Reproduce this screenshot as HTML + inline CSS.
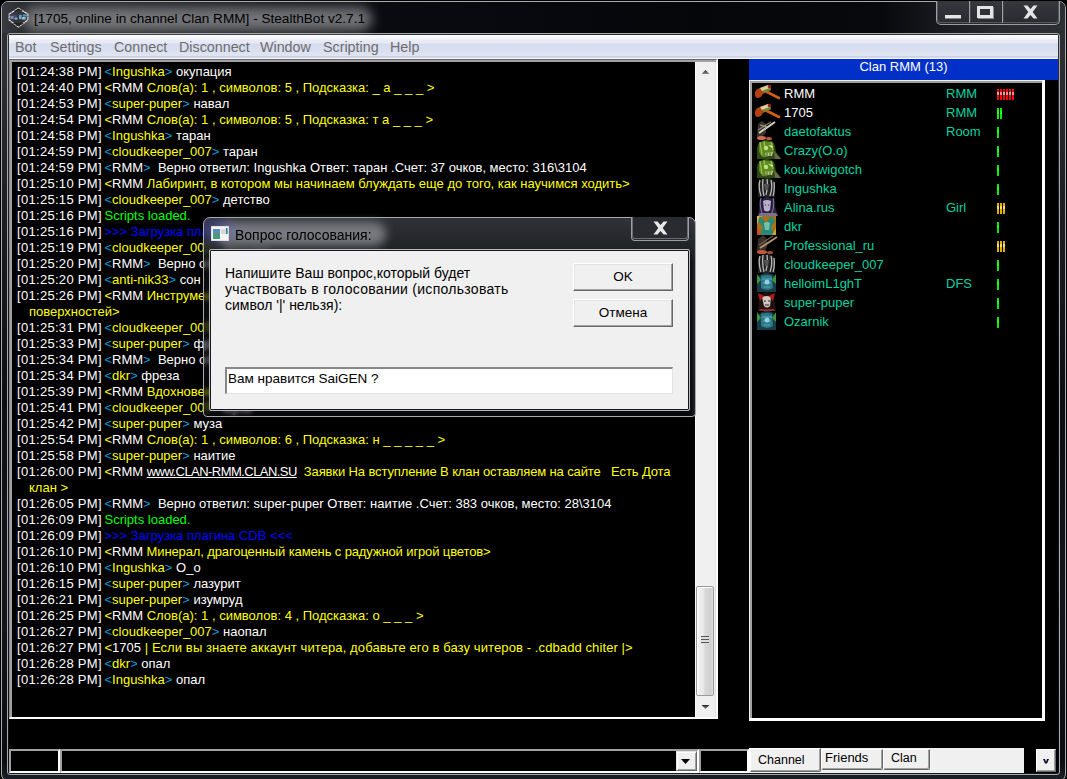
<!DOCTYPE html>
<html><head><meta charset="utf-8">
<style>
*{margin:0;padding:0;box-sizing:border-box}
html,body{width:1067px;height:779px;overflow:hidden;background:#000}
body{position:relative;font-family:"Liberation Sans",sans-serif}
.a{position:absolute}
#frame{left:1px;top:1px;width:1065px;height:781px;border:1px solid #a9abae;border-radius:7px 7px 8px 8px;
 background:linear-gradient(180deg,#2e2f33 0px,#2e2f33 60px,#1d1f23 200px,#0c0e12 400px,#14161b 600px,#0a0c10 760px,#1a1e25 776px)}
#titlebar{left:2px;top:2px;width:1063px;height:31px;border-radius:6px 6px 0 0;
 background:linear-gradient(90deg,#3a3b40 0px,#2a2b2f 20px,#0a0b10 380px,#05060a 700px,#08090d 880px,#2a2b30 1000px,#2e2f33 1063px)}
#titleglow{left:24px;top:7px;width:348px;height:24px;border-radius:12px;background:#8a8b8e;filter:blur(6px);opacity:.8}
#title{left:34px;top:10px;font-size:13.6px;color:#000;white-space:pre;line-height:18px}
#innerline{left:7px;top:33px;width:1053px;height:742px;border:1px solid #a5a7aa;border-radius:3px}
#client{left:9px;top:35px;width:1049px;height:738px;background:#000}
#menubar{left:9px;top:35px;width:1049px;height:24px;
 background:linear-gradient(180deg,#fcfcfe 0px,#f4f5fa 4px,#e9ecf6 5px,#e6e9f5 8px,#d6dbee 9px,#e0e5f3 21px,#b9bfd4 22px,#f4f5f8 23px)}
.mi{top:38px;font-size:14.3px;color:#6d6d6d;white-space:pre;line-height:18px}
#chat{left:9px;top:59px;width:709px;height:660px;background:#000;
 border-top:1px solid #696969;border-left:1px solid #8a8a8a;border-right:2px solid #fff;border-bottom:2px solid #fff}
#chatin{left:10px;top:60px;width:706px;height:657px;border-top:2px solid #a0a0a0;border-left:2px solid #a0a0a0}
#vs{left:695px;top:62px;width:21px;height:655px;background:linear-gradient(90deg,#fcfcfc 0,#fcfcfc 1px,#f0f0f0 1px,#f0f0f0 20px,#e3e3e3 20px)}
#lines{left:17px;top:64px;width:680px;font-size:13px;line-height:16px;color:#fff}
#lines div{height:16px;white-space:pre}
.y{color:#ffff00}.c{color:#0a9ad8}.g{color:#00ff00}.b{color:#0000ff}.u{text-decoration:underline}
.ind{padding-left:12px}
.ts{letter-spacing:.3px;margin-right:-1px}
#hdr{left:749px;top:59px;width:309px;height:21px;background:#0030c8;color:#fff;font-size:13px;line-height:16px;text-align:center}
#ul{left:749px;top:80px;width:296px;height:641px;background:#000;
 border-top:1px solid #f0f0f0;border-left:1px solid #f0f0f0;border-right:3px solid #fff;border-bottom:3px solid #fff}
#ulin{left:750px;top:81px;width:292px;height:637px;border-top:2px solid #a0a0a0;border-left:2px solid #a0a0a0}

.box{background:#000;border-top:2px solid #a0a0a0;border-left:2px solid #a0a0a0;border-right:2px solid #fff;border-bottom:2px solid #fff}

.ur{position:absolute;left:0;width:296px;height:19px}
.ur svg{position:absolute;left:4px;top:0}
.ur .n{position:absolute;left:34px;top:1px;font-size:13px;line-height:19px;white-space:pre;color:#00d4a0}
.ur .cl{position:absolute;left:196px;top:1px;font-size:13px;line-height:19px;white-space:pre;color:#00d4a0}
.ur .lag{position:absolute;left:247px;top:6px;height:11px}
.tbb{border:1px solid #9c9ea2;border-top:none}
.btn3d{background:#f0f0f0;border-top:1px solid #fff;border-left:1px solid #fff;border-right:1px solid #696969;border-bottom:1px solid #696969;box-shadow:inset -1px -1px 0 #a0a0a0, inset 1px 1px 0 #e3e3e3}
.dlgt{font-size:14px;line-height:16px;white-space:pre;color:#000}
</style></head><body>
<div class="a" id="frame"></div>
<div class="a" id="titlebar"></div>
<div class="a" id="titleglow"></div>
<div class="a" id="title">[1705, online in channel Clan RMM] - StealthBot v2.7.1</div>
<div class="a" id="innerline"></div>
<div class="a" id="client"></div>
<div class="a" id="menubar"></div>
<div class="a mi" style="left:15px">Bot</div>
<div class="a mi" style="left:50px">Settings</div>
<div class="a mi" style="left:114px">Connect</div>
<div class="a mi" style="left:179px">Disconnect</div>
<div class="a mi" style="left:260px">Window</div>
<div class="a mi" style="left:323px">Scripting</div>
<div class="a mi" style="left:390px">Help</div>

<div class="a" id="chat"></div>
<div class="a" id="chatin"></div>
<div class="a" id="vs"></div>
<div class="a" id="lines">
<div><span class="ts">[01:24:38 PM]</span> <span class="c">&lt;</span><span class="y">Ingushka</span><span class="c">&gt;</span> окупация</div>
<div><span class="ts">[01:24:40 PM]</span> <span class="y">&lt;</span>RMM<span class="y"> Слов(а): 1 , символов: 5 , Подсказка: _ а _ _ _ &gt;</span></div>
<div><span class="ts">[01:24:53 PM]</span> <span class="c">&lt;</span><span class="y">super-puper</span><span class="c">&gt;</span> навал</div>
<div><span class="ts">[01:24:54 PM]</span> <span class="y">&lt;</span>RMM<span class="y"> Слов(а): 1 , символов: 5 , Подсказка: т а _ _ _ &gt;</span></div>
<div><span class="ts">[01:24:58 PM]</span> <span class="c">&lt;</span><span class="y">Ingushka</span><span class="c">&gt;</span> таран</div>
<div><span class="ts">[01:24:59 PM]</span> <span class="c">&lt;</span><span class="y">cloudkeeper_007</span><span class="c">&gt;</span> таран</div>
<div><span class="ts">[01:24:59 PM]</span> <span class="c">&lt;</span>RMM<span class="c">&gt;</span>  Верно ответил: Ingushka Ответ: таран .Счет: 37 очков, место: 316\3104</div>
<div><span class="ts">[01:25:10 PM]</span> <span class="y">&lt;</span>RMM<span class="y"> Лабиринт, в котором мы начинаем блуждать еще до того, как научимся ходить&gt;</span></div>
<div><span class="ts">[01:25:15 PM]</span> <span class="c">&lt;</span><span class="y">cloudkeeper_007</span><span class="c">&gt;</span> детство</div>
<div><span class="ts">[01:25:16 PM]</span> <span class="g">Scripts loaded.</span></div>
<div><span class="ts">[01:25:16 PM]</span> <span class="b">&gt;&gt;&gt; Загрузка плагина CDB &lt;&lt;&lt;</span></div>
<div><span class="ts">[01:25:19 PM]</span> <span class="c">&lt;</span><span class="y">cloudkeeper_007</span><span class="c">&gt;</span> детство</div>
<div><span class="ts">[01:25:20 PM]</span> <span class="c">&lt;</span>RMM<span class="c">&gt;</span>  Верно ответил: cloudkeeper_007 Ответ: детство .Счет: 52 очков, место: 250\3104</div>
<div><span class="ts">[01:25:20 PM]</span> <span class="c">&lt;</span><span class="y">anti-nik33</span><span class="c">&gt;</span> сон</div>
<div><span class="ts">[01:25:26 PM]</span> <span class="y">&lt;</span>RMM<span class="y"> Инструмент для обработки металлических и деревянных поверхностей, режущий</span></div>
<div class="ind"><span class="y">поверхностей&gt;</span></div>
<div><span class="ts">[01:25:31 PM]</span> <span class="c">&lt;</span><span class="y">cloudkeeper_007</span><span class="c">&gt;</span> фреза</div>
<div><span class="ts">[01:25:33 PM]</span> <span class="c">&lt;</span><span class="y">super-puper</span><span class="c">&gt;</span> фреза</div>
<div><span class="ts">[01:25:34 PM]</span> <span class="c">&lt;</span>RMM<span class="c">&gt;</span>  Верно ответил: dkr Ответ: фреза .Счет: 12 очков, место: 900\3104</div>
<div><span class="ts">[01:25:34 PM]</span> <span class="c">&lt;</span><span class="y">dkr</span><span class="c">&gt;</span> фреза</div>
<div><span class="ts">[01:25:39 PM]</span> <span class="y">&lt;</span>RMM<span class="y"> Вдохновение, творческий дух поэта&gt;</span></div>
<div><span class="ts">[01:25:41 PM]</span> <span class="c">&lt;</span><span class="y">cloudkeeper_007</span><span class="c">&gt;</span> муза</div>
<div><span class="ts">[01:25:42 PM]</span> <span class="c">&lt;</span><span class="y">super-puper</span><span class="c">&gt;</span> муза</div>
<div><span class="ts">[01:25:54 PM]</span> <span class="y">&lt;</span>RMM<span class="y"> Слов(а): 1 , символов: 6 , Подсказка: н _ _ _ _ _ &gt;</span></div>
<div><span class="ts">[01:25:58 PM]</span> <span class="c">&lt;</span><span class="y">super-puper</span><span class="c">&gt;</span> наитие</div>
<div><span class="ts">[01:26:00 PM]</span> <span class="y">&lt;</span>RMM <span class="u" style="letter-spacing:-.55px">www.CLAN-RMM.CLAN.SU</span><span class="y" style="letter-spacing:-.12px">  Заявки На вступление В клан оставляем на сайте   Есть Дота</span></div>
<div class="ind"><span class="y">клан &gt;</span></div>
<div><span class="ts">[01:26:05 PM]</span> <span class="c">&lt;</span>RMM<span class="c">&gt;</span>  Верно ответил: super-puper Ответ: наитие .Счет: 383 очков, место: 28\3104</div>
<div><span class="ts">[01:26:09 PM]</span> <span class="g">Scripts loaded.</span></div>
<div><span class="ts">[01:26:09 PM]</span> <span class="b">&gt;&gt;&gt; Загрузка плагина CDB &lt;&lt;&lt;</span></div>
<div><span class="ts">[01:26:10 PM]</span> <span class="y">&lt;</span>RMM<span class="y" style="letter-spacing:-.12px"> Минерал, драгоценный камень с радужной игрой цветов&gt;</span></div>
<div><span class="ts">[01:26:10 PM]</span> <span class="c">&lt;</span><span class="y">Ingushka</span><span class="c">&gt;</span> O_o</div>
<div><span class="ts">[01:26:15 PM]</span> <span class="c">&lt;</span><span class="y">super-puper</span><span class="c">&gt;</span> лазурит</div>
<div><span class="ts">[01:26:21 PM]</span> <span class="c">&lt;</span><span class="y">super-puper</span><span class="c">&gt;</span> изумруд</div>
<div><span class="ts">[01:26:25 PM]</span> <span class="y">&lt;</span>RMM<span class="y"> Слов(а): 1 , символов: 4 , Подсказка: о _ _ _ &gt;</span></div>
<div><span class="ts">[01:26:27 PM]</span> <span class="c">&lt;</span><span class="y">cloudkeeper_007</span><span class="c">&gt;</span> наопал</div>
<div><span class="ts">[01:26:27 PM]</span> <span class="y">&lt;</span>1705<span class="y" style="letter-spacing:.1px"> | Если вы знаете аккаунт читера, добавьте его в базу читеров - .cdbadd chiter |&gt;</span></div>
<div><span class="ts">[01:26:28 PM]</span> <span class="c">&lt;</span><span class="y">dkr</span><span class="c">&gt;</span> опал</div>
<div><span class="ts">[01:26:28 PM]</span> <span class="c">&lt;</span><span class="y">Ingushka</span><span class="c">&gt;</span> опал</div>
</div>

<div class="a" id="hdr">Clan RMM (13)</div>
<div class="a" id="ul"></div>
<div class="a" id="ulin"></div>

<div class="a box" style="left:9px;top:749px;width:51px;height:24px"></div>
<div class="a box" style="left:60px;top:749px;width:639px;height:24px"></div>
<div class="a box" style="left:699px;top:749px;width:50px;height:24px"></div>
<div class="a" style="left:750px;top:83px;width:296px;height:300px">
<div class="ur" style="top:0px"><svg width="28" height="19" viewBox="0 0 28 19"><line x1="13" y1="9" x2="25" y2="15" stroke="#d06010" stroke-width="2.6" stroke-linecap="round"/><path d="M1,11 Q1,6 6,5 L14,2 Q17,3 17,7 L9,11 Q6,15 3,15 Q1,14 1,11Z" fill="#a84a10"/><path d="M6,5 L14,2 Q16,3 16,5 L8,8Z" fill="#d8d0a0"/><path d="M9,8 L16,5 L17,7 L10,10Z" fill="#709040"/><ellipse cx="4.5" cy="11" rx="3.5" ry="3.6" fill="#b84010"/><circle cx="15.5" cy="3.5" r="1.8" fill="#902818"/></svg><span class="n" style="color:#ffffff">RMM</span><span class="cl">RMM</span><svg class="lag" width="18" height="11"><rect x="0" y="0" width="2" height="11" fill="#ff0000"/><rect x="0" y="3" width="2" height="3" fill="#ff9090"/><rect x="3" y="0" width="2" height="11" fill="#ff0000"/><rect x="3" y="3" width="2" height="3" fill="#ff9090"/><rect x="6" y="0" width="2" height="11" fill="#ff0000"/><rect x="6" y="3" width="2" height="3" fill="#ff9090"/><rect x="9" y="0" width="2" height="11" fill="#ff0000"/><rect x="9" y="3" width="2" height="3" fill="#ff9090"/><rect x="12" y="0" width="2" height="11" fill="#ff0000"/><rect x="12" y="3" width="2" height="3" fill="#ff9090"/><rect x="15" y="0" width="2" height="11" fill="#ff0000"/><rect x="15" y="3" width="2" height="3" fill="#ff9090"/></svg></div>
<div class="ur" style="top:19px"><svg width="28" height="19" viewBox="0 0 28 19"><line x1="13" y1="9" x2="25" y2="15" stroke="#d06010" stroke-width="2.6" stroke-linecap="round"/><path d="M1,11 Q1,6 6,5 L14,2 Q17,3 17,7 L9,11 Q6,15 3,15 Q1,14 1,11Z" fill="#a84a10"/><path d="M6,5 L14,2 Q16,3 16,5 L8,8Z" fill="#d8d0a0"/><path d="M9,8 L16,5 L17,7 L10,10Z" fill="#709040"/><ellipse cx="4.5" cy="11" rx="3.5" ry="3.6" fill="#b84010"/><circle cx="15.5" cy="3.5" r="1.8" fill="#902818"/></svg><span class="n" style="color:#ffffff">1705</span><span class="cl">RMM</span><svg class="lag" width="6" height="11"><rect x="0" y="0" width="2" height="11" fill="#00ee00"/><rect x="0" y="3" width="2" height="3" fill="#20ff20"/><rect x="3" y="0" width="2" height="11" fill="#00ee00"/><rect x="3" y="3" width="2" height="3" fill="#20ff20"/></svg></div>
<div class="ur" style="top:38px"><svg width="28" height="19" viewBox="0 0 28 19"><path d="M3,16 L4,3 L8,0 L12,3 L12,12 L8,16Z" fill="#3a3430"/><path d="M21,1 L5,12" stroke="#d8d0c0" stroke-width="2"/><path d="M17,1 L4,9" stroke="#8a8070" stroke-width="1.2"/><path d="M6,4 L13,6 L9,10" stroke="#b0a898" stroke-width="1" fill="none"/><ellipse cx="7.5" cy="17" rx="4.5" ry="2" fill="#d06a50"/><ellipse cx="15" cy="17.5" rx="3" ry="1.6" fill="#c05a40"/></svg><span class="n">daetofaktus</span><span class="cl">Room</span><svg class="lag" width="3" height="11"><rect x="0" y="0" width="2" height="11" fill="#00ee00"/><rect x="0" y="3" width="2" height="3" fill="#20ff20"/></svg></div>
<div class="ur" style="top:57px"><svg width="28" height="19" viewBox="0 0 28 19"><path d="M3,19 L3,7 Q5,0 13,0 Q20,0 21,6 L22,12 L27,19Z" fill="#2e4a10"/><path d="M5,3 Q12,0 19,3 L20,12 Q15,18 8,17 L5,12Z" fill="#5e8a22"/><path d="M6,2 L8,15 M10,1 L11,9 M17,2 L19,10" stroke="#9cc050" stroke-width="1.2"/><circle cx="12" cy="8" r="2.2" fill="#c0e080"/><path d="M14,5 L19,6 L18,8Z" fill="#d8f0a0"/><path d="M11,13 L19,12 L18,16 L12,16Z" fill="#b8c888"/><path d="M13,13 L13,16 M16,12.5 L16,16" stroke="#2e4010" stroke-width=".8"/><path d="M20,11 L27,19 L21,19Z" fill="#6a6a48"/></svg><span class="n">Crazy(O.o)</span><span class="cl"></span><svg class="lag" width="3" height="11"><rect x="0" y="0" width="2" height="11" fill="#00ee00"/><rect x="0" y="3" width="2" height="3" fill="#20ff20"/></svg></div>
<div class="ur" style="top:76px"><svg width="28" height="19" viewBox="0 0 28 19"><path d="M3,19 L3,7 Q5,0 13,0 Q20,0 21,6 L22,12 L27,19Z" fill="#2e4a10"/><path d="M5,3 Q12,0 19,3 L20,12 Q15,18 8,17 L5,12Z" fill="#5e8a22"/><path d="M6,2 L8,15 M10,1 L11,9 M17,2 L19,10" stroke="#9cc050" stroke-width="1.2"/><circle cx="12" cy="8" r="2.2" fill="#c0e080"/><path d="M14,5 L19,6 L18,8Z" fill="#d8f0a0"/><path d="M11,13 L19,12 L18,16 L12,16Z" fill="#b8c888"/><path d="M13,13 L13,16 M16,12.5 L16,16" stroke="#2e4010" stroke-width=".8"/><path d="M20,11 L27,19 L21,19Z" fill="#6a6a48"/></svg><span class="n">kou.kiwigotch</span><span class="cl"></span><svg class="lag" width="3" height="11"><rect x="0" y="0" width="2" height="11" fill="#00ee00"/><rect x="0" y="3" width="2" height="3" fill="#20ff20"/></svg></div>
<div class="ur" style="top:95px"><svg width="28" height="19" viewBox="0 0 28 19"><path d="M4,19 L4,5 Q7,0 13,0 Q19,0 21,5 L21,19Z" fill="#222"/><path d="M6,2 Q4,9 7,18 M9,1 Q8,10 10,18 M13,1 Q14,9 12,17 M17,2 Q19,10 16,18 M20,4 Q21,12 19,18" stroke="#b8b8b8" stroke-width="1.3" fill="none"/><path d="M10,6 L15,6 L14,12 L11,12Z" fill="#555"/></svg><span class="n">Ingushka</span><span class="cl"></span><svg class="lag" width="3" height="11"><rect x="0" y="0" width="2" height="11" fill="#00ee00"/><rect x="0" y="3" width="2" height="3" fill="#20ff20"/></svg></div>
<div class="ur" style="top:114px"><svg width="28" height="19" viewBox="0 0 28 19"><path d="M4,19 L6,5 Q9,0 14,0 Q19,1 20,6 L24,19Z" fill="#2a2040"/><path d="M9,4 Q13,2 17,4 L16,13 Q13,16 10,13Z" fill="#b8b0c8"/><path d="M11,8 L12,8 M14,8 L15,8" stroke="#302040" stroke-width="1"/><path d="M7,1 Q5,8 8,16 M19,1 Q21,8 18,16" stroke="#8070a0" stroke-width="1.2" fill="none"/><path d="M6,16 L22,16 L24,19 L4,19Z" fill="#7a7090"/></svg><span class="n">Alina.rus</span><span class="cl">Girl</span><svg class="lag" width="9" height="11"><rect x="0" y="0" width="2" height="11" fill="#e0b000"/><rect x="0" y="3" width="2" height="3" fill="#ffe060"/><rect x="3" y="0" width="2" height="11" fill="#e0b000"/><rect x="3" y="3" width="2" height="3" fill="#ffe060"/><rect x="6" y="0" width="2" height="11" fill="#e0b000"/><rect x="6" y="3" width="2" height="3" fill="#ffe060"/></svg></div>
<div class="ur" style="top:133px"><svg width="28" height="19" viewBox="0 0 28 19"><rect x="3" y="0" width="19" height="19" fill="#a87018"/><path d="M3,0 L8,0 L3,8Z" fill="#d8b040"/><path d="M6,0 L12,7 L17,0 L21,5 L17,11 L21,19 L6,19 L9,11 L4,5Z" fill="#2a8878"/><path d="M10,7 Q13,5 16,7 L15,14 L11,14Z" fill="#70c0a8"/><path d="M3,11 L7,19 L3,19Z" fill="#d04818"/><path d="M22,12 L18,19 L22,19Z" fill="#d8a030"/></svg><span class="n">dkr</span><span class="cl"></span><svg class="lag" width="3" height="11"><rect x="0" y="0" width="2" height="11" fill="#00ee00"/><rect x="0" y="3" width="2" height="3" fill="#20ff20"/></svg></div>
<div class="ur" style="top:152px"><svg width="28" height="19" viewBox="0 0 28 19"><path d="M3,17 L4,4 L9,0 L13,4 L13,13 L8,17Z" fill="#3a3028"/><path d="M23,2 L6,13" stroke="#b09070" stroke-width="2"/><path d="M19,1 L5,10" stroke="#706050" stroke-width="1.2"/><ellipse cx="8" cy="17" rx="5" ry="2" fill="#c05a38"/><ellipse cx="16" cy="17.5" rx="3" ry="1.5" fill="#a84a30"/></svg><span class="n">Professional_ru</span><span class="cl"></span><svg class="lag" width="9" height="11"><rect x="0" y="0" width="2" height="11" fill="#e0b000"/><rect x="0" y="3" width="2" height="3" fill="#ffe060"/><rect x="3" y="0" width="2" height="11" fill="#e0b000"/><rect x="3" y="3" width="2" height="3" fill="#ffe060"/><rect x="6" y="0" width="2" height="11" fill="#e0b000"/><rect x="6" y="3" width="2" height="3" fill="#ffe060"/></svg></div>
<div class="ur" style="top:171px"><svg width="28" height="19" viewBox="0 0 28 19"><path d="M4,19 L4,5 Q7,0 13,0 Q19,0 21,5 L21,19Z" fill="#222"/><path d="M6,2 Q4,9 7,18 M9,1 Q8,10 10,18 M13,1 Q14,9 12,17 M17,2 Q19,10 16,18 M20,4 Q21,12 19,18" stroke="#b8b8b8" stroke-width="1.3" fill="none"/><path d="M10,6 L15,6 L14,12 L11,12Z" fill="#555"/></svg><span class="n">cloudkeeper_007</span><span class="cl"></span><svg class="lag" width="3" height="11"><rect x="0" y="0" width="2" height="11" fill="#00ee00"/><rect x="0" y="3" width="2" height="3" fill="#20ff20"/></svg></div>
<div class="ur" style="top:190px"><svg width="28" height="19" viewBox="0 0 28 19"><path d="M3,19 L3,6 Q6,0 13,0 Q20,0 22,6 L22,19Z" fill="#183c48"/><path d="M7,3 Q13,1 18,3 L19,15 Q13,19 7,15Z" fill="#2e7888"/><path d="M8,6 L18,6 M9,10 L17,10 M10,14 L16,14" stroke="#5aa8b8" stroke-width="1"/><circle cx="13" cy="9" r="2.5" fill="#90d0e0"/><path d="M3,1 L7,7 L3,11Z M22,1 L18,7 L22,11Z" fill="#3a9a3a"/></svg><span class="n">helloimL1ghT</span><span class="cl">DFS</span><svg class="lag" width="3" height="11"><rect x="0" y="0" width="2" height="11" fill="#00ee00"/><rect x="0" y="3" width="2" height="3" fill="#20ff20"/></svg></div>
<div class="ur" style="top:209px"><svg width="28" height="19" viewBox="0 0 28 19"><path d="M4,19 L5,6 Q8,0 13,0 Q19,0 20,6 L22,19Z" fill="#201010"/><path d="M8,5 Q13,3 17,5 L16,14 Q13,17 10,14Z" fill="#d0c8c0"/><path d="M10,9 L12,9 M14,9 L16,9 M11,13 L15,13" stroke="#301818" stroke-width="1"/><path d="M4,1 L10,4 L6,9Z M21,1 L15,4 L19,9Z" fill="#b81818"/><path d="M6,17 L20,17 L21,19 L5,19Z" fill="#902828"/></svg><span class="n">super-puper</span><span class="cl"></span><svg class="lag" width="3" height="11"><rect x="0" y="0" width="2" height="11" fill="#00ee00"/><rect x="0" y="3" width="2" height="3" fill="#20ff20"/></svg></div>
<div class="ur" style="top:228px"><svg width="28" height="19" viewBox="0 0 28 19"><path d="M3,19 L3,6 Q6,0 13,0 Q20,0 22,6 L22,19Z" fill="#183c48"/><path d="M7,3 Q13,1 18,3 L19,15 Q13,19 7,15Z" fill="#2e7888"/><path d="M8,6 L18,6 M9,10 L17,10 M10,14 L16,14" stroke="#5aa8b8" stroke-width="1"/><circle cx="13" cy="9" r="2.5" fill="#90d0e0"/><path d="M3,1 L7,7 L3,11Z M22,1 L18,7 L22,11Z" fill="#3a9a3a"/></svg><span class="n">Ozarnik</span><span class="cl"></span><svg class="lag" width="3" height="11"><rect x="0" y="0" width="2" height="11" fill="#00ee00"/><rect x="0" y="3" width="2" height="3" fill="#20ff20"/></svg></div>
</div>

<svg class="a" style="left:701px;top:69px" width="9" height="6" viewBox="0 0 9 6"><defs><linearGradient id="ga" x1="0" y1="0" x2="0" y2="1"><stop offset="0" stop-color="#202020"/><stop offset="1" stop-color="#909090"/></linearGradient></defs><path d="M4.5,1 L8.5,5 L0.5,5Z" fill="url(#ga)"/></svg>
<svg class="a" style="left:701px;top:704px" width="9" height="6" viewBox="0 0 9 6"><defs><linearGradient id="gb" x1="0" y1="0" x2="0" y2="1"><stop offset="0" stop-color="#202020"/><stop offset="1" stop-color="#909090"/></linearGradient></defs><path d="M0.5,1 L8.5,1 L4.5,5Z" fill="url(#gb)"/></svg>
<div class="a" style="left:696px;top:586px;width:18px;height:110px;border:1px solid #9a9a9a;border-radius:2px;background:linear-gradient(90deg,#f4f4f4 0,#e8e8e8 40%,#d8d8d8 50%,#d0d0d0 85%,#e0e0e0 100%);box-shadow:inset 1px 1px 0 #fff"></div>
<div class="a" style="left:701px;top:636px;width:8px;height:8px;background:repeating-linear-gradient(180deg,#555 0,#555 1px,#ddd 1px,#ddd 3px)"></div>

<div class="a" style="left:676px;top:751px;width:21px;height:20px;background:#f0f0f0;border-top:1px solid #e3e3e3;border-left:1px solid #e3e3e3;border-right:1px solid #696969;border-bottom:1px solid #696969;box-shadow:inset 1px 1px 0 #fff,inset -1px -1px 0 #a0a0a0"></div>
<svg class="a" style="left:681px;top:759px" width="9" height="5" viewBox="0 0 9 5"><path d="M0,0 L9,0 L4.5,5Z" fill="#000"/></svg>
<div class="a" style="left:749px;top:748px;width:275px;height:25px;background:#f0f0f0"></div>
<div class="a" style="left:749px;top:748px;width:72px;height:24px;background:#f0f0f0;border-left:2px solid #fff;border-top:1px solid #fff;border-right:1px solid #696969;border-bottom:1px solid #696969;border-radius:0 0 2px 2px;box-shadow:inset -1px -1px 0 #a0a0a0"></div>
<div class="a" style="left:821px;top:749px;width:62px;height:21px;background:#f0f0f0;border-left:1px solid #fff;border-top:1px solid #fff;border-right:1px solid #696969;border-bottom:1px solid #696969;border-radius:0 0 2px 2px;box-shadow:inset -1px -1px 0 #a0a0a0"></div>
<div class="a" style="left:883px;top:749px;width:47px;height:21px;background:#f0f0f0;border-left:1px solid #fff;border-top:1px solid #fff;border-right:1px solid #696969;border-bottom:1px solid #696969;border-radius:0 0 2px 2px;box-shadow:inset -1px -1px 0 #a0a0a0"></div>
<div class="a" style="left:758px;top:752px;font-size:12.5px;line-height:16px;color:#000">Channel</div>
<div class="a" style="left:825px;top:750px;font-size:13px;line-height:16px;color:#000">Friends</div>
<div class="a" style="left:891px;top:750px;font-size:12.5px;line-height:16px;color:#000">Clan</div>
<div class="a" style="left:1036px;top:749px;width:20px;height:23px;background:#f0f0f0;border-top:1px solid #fff;border-left:1px solid #fff;border-right:1px solid #696969;border-bottom:1px solid #696969;box-shadow:inset -1px -1px 0 #a0a0a0"></div>
<svg class="a" style="left:1043px;top:759px" width="6" height="5" viewBox="0 0 6 5"><path d="M0,0 L2,0 L3,3 L4,0 L6,0 L4,4.5 L2,4.5Z" fill="#0a0a30"/></svg>

<div class="a" style="left:936px;top:1px;width:124px;height:24px;border:1px solid #9c9ea2;border-top:none;border-radius:0 0 5px 5px;background:linear-gradient(180deg,#36373c,#2a2b30)"></div>
<div class="a" style="left:937px;top:1px;width:122px;height:22px;border:1px solid #55575c;border-top:none;border-radius:0 0 4px 4px"></div>
<div class="a" style="left:969px;top:1px;width:1px;height:22px;background:#9c9ea2"></div>
<div class="a" style="left:970px;top:1px;width:1px;height:22px;background:#45474c"></div>
<div class="a" style="left:1002px;top:1px;width:1px;height:22px;background:#9c9ea2"></div>
<div class="a" style="left:1003px;top:1px;width:1px;height:22px;background:#45474c"></div>
<div class="a" style="left:945px;top:15px;width:16px;height:3px;background:#e4e4e4;box-shadow:0 1px 0 #888"></div>
<div class="a" style="left:977px;top:6px;width:16px;height:12px;border:3px solid #e4e4e4;border-bottom-width:3px;box-shadow:1px 1px 0 #888"></div>
<svg class="a" style="left:1023px;top:5px" width="15" height="14" viewBox="0 0 15 14"><path d="M0.5,0.5 L4.5,0.5 L7.5,4 L10.5,0.5 L14.5,0.5 L9.7,7 L14.5,13.5 L10.5,13.5 L7.5,10 L4.5,13.5 L0.5,13.5 L5.3,7Z" fill="#e4e4e4"/></svg>
<svg class="a" style="left:6px;top:6px" width="25" height="24" viewBox="0 0 25 24"><path d="M12.3,2.3 L21.8,8 L21.8,14 L12.5,21 L3.2,14 L3.2,8 Z" fill="#333438" stroke="#e0e0e0" stroke-width="1.3" stroke-dasharray="3 0.5"/><path d="M8,5 L17,5 L12.5,2.5Z M7,17 L18,17 L12.5,20.5Z" fill="#222"/><rect x="3.8" y="8.3" width="17.4" height="5.6" fill="#3a4a5a"/><rect x="4.5" y="10" width="3" height="3" fill="#7a8ab0"/><rect x="8" y="9" width="3" height="3" fill="#4a3a7a"/><rect x="8.5" y="11.5" width="3.5" height="2" fill="#90a8c0"/><rect x="13" y="9" width="2.5" height="4" fill="#60b0c8"/><rect x="16" y="11" width="3.5" height="2.5" fill="#a0b8d0"/><rect x="17" y="8.5" width="4" height="2" fill="#5a90b0"/><rect x="11.5" y="8.3" width="1" height="5.6" fill="#222"/></svg>

<!-- dialog -->
<div class="a" style="left:203px;top:217px;width:493px;height:200px;border:1px solid #a8aaae;border-radius:7px 7px 4px 4px;background:linear-gradient(180deg,rgba(58,59,66,.85) 0,rgba(42,43,48,.8) 30px,rgba(30,32,36,.4) 45px,rgba(24,26,30,.3) 200px);backdrop-filter:blur(2.5px);-webkit-backdrop-filter:blur(2.5px)"></div>
<div class="a" style="left:216px;top:222px;width:170px;height:24px;border-radius:12px;background:#8c8d92;filter:blur(5px);opacity:.8"></div>
<div class="a" style="left:204px;top:218px;width:40px;height:30px;background:radial-gradient(ellipse at 30% 40%,rgba(90,90,200,.5),rgba(0,0,0,0) 70%)"></div>
<svg class="a" style="left:211px;top:226px" width="18" height="15" viewBox="0 0 18 15"><rect x="0" y="0" width="18" height="15" fill="#f4f4f4" stroke="#c8c8c8" stroke-width="1"/><rect x="2" y="3" width="7" height="10" fill="#4a9a7a"/><rect x="2" y="3" width="7" height="4" fill="#5a8ab8"/><rect x="10" y="3" width="5" height="5" fill="#d8d8d8"/><rect x="15" y="2" width="1.5" height="6" fill="#2a6aca"/><rect x="15" y="5" width="1.5" height="3" fill="#2aaa4a"/></svg>
<div class="a dlgt" style="left:235px;top:227px;line-height:16px">Вопрос голосования:</div>
<div class="a tbb" style="left:631px;top:217px;width:58px;height:24px;border-radius:0 0 4px 4px;background:#2a2b30"></div>
<div class="a" style="left:632px;top:217px;width:56px;height:22px;border:1px solid #6a6c70;border-top:none;border-radius:0 0 3px 3px"></div>
<svg class="a" style="left:653px;top:221px" width="15" height="14" viewBox="0 0 15 14"><path d="M0.5,0.5 L4.5,0.5 L7.5,4 L10.5,0.5 L14.5,0.5 L9.7,7 L14.5,13.5 L10.5,13.5 L7.5,10 L4.5,13.5 L0.5,13.5 L5.3,7Z" fill="#e8e8e8"/></svg>
<div class="a" style="left:209px;top:249px;width:481px;height:162px;border:1px solid #b8babe;border-radius:2px;background:#f0f0f0;box-shadow:inset 0 0 0 1px #15171a"></div>
<div class="a dlgt" style="left:225px;top:265px">Напишите Ваш вопрос,который будет</div>
<div class="a dlgt" style="left:225px;top:281px;letter-spacing:.285px">участвовать в голосовании (использовать</div>
<div class="a dlgt" style="left:225px;top:297px">символ '|' нельзя):</div>
<div class="a btn3d" style="left:573px;top:263px;width:100px;height:28px"></div>
<div class="a dlgt" style="left:573px;top:269px;width:100px;text-align:center;font-size:13.5px">OK</div>
<div class="a btn3d" style="left:573px;top:299px;width:100px;height:28px"></div>
<div class="a dlgt" style="left:573px;top:305px;width:100px;text-align:center;font-size:13.5px">Отмена</div>
<div class="a" style="left:225px;top:367px;width:448px;height:27px;background:#fff;border-top:2px solid #888;border-left:2px solid #888;border-right:1px solid #e3e3e3;border-bottom:1px solid #e3e3e3"></div>
<div class="a dlgt" style="left:228px;top:371px;font-size:13.5px">Вам нравится SaiGEN ?</div>
</body></html>
